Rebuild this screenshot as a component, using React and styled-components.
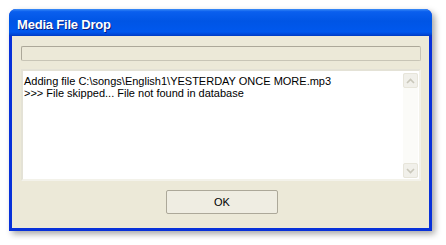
import React from "react";
import styled, { createGlobalStyle } from "styled-components";

const GlobalStyle = createGlobalStyle`
  html, body {
    margin: 0;
    padding: 0;
    background: #ffffff;
  }
  body {
    font-family: "Liberation Sans", Arial, sans-serif;
  }
`;

const lines = [
  "Adding file C:\\songs\\English1\\YESTERDAY ONCE MORE.mp3",
  ">>> File skipped... File not found in database",
];

const App = () => {
  return (
    <>
      <GlobalStyle />
      <Page>
        <Window>
          <TitleBar>
            <Title>Media File Drop</Title>
          </TitleBar>
          <Body>
            <Progress />
            <LogBox>
              <LogText>
                {lines.map((l, i) => (
                  <div key={i}>{l}</div>
                ))}
              </LogText>
              <ScrollBar>
                <ScrollButton>
                  <Arrow up />
                </ScrollButton>
                <Track />
                <ScrollButton>
                  <Arrow />
                </ScrollButton>
              </ScrollBar>
            </LogBox>
            <ButtonRow>
              <Button>OK</Button>
            </ButtonRow>
          </Body>
        </Window>
      </Page>
    </>
  );
};

const Arrow = ({ up }) => (
  <svg width="9" height="6" viewBox="0 0 9 6">
    <path
      d={up ? "M1 5 L4.5 1.5 L8 5" : "M1 1 L4.5 4.5 L8 1"}
      fill="none"
      stroke="#c9c7ba"
      strokeWidth="1.6"
    />
  </svg>
);

const Page = styled.div`
  padding: 9px;
`;

const Window = styled.div`
  width: 423px;
  height: 222px;
  box-sizing: border-box;
  display: flex;
  flex-direction: column;
  background: #0831d9;
  border-radius: 7px 7px 0 0;
  box-shadow: 3px 3px 6px rgba(0, 0, 0, 0.35);
  padding: 0 3px 3px 3px;
`;

const TitleBar = styled.div`
  height: 27px;
  margin: 0 -3px;
  padding: 0 8px;
  display: flex;
  align-items: center;
  border-radius: 7px 7px 0 0;
  background: linear-gradient(
    to bottom,
    #3b8cf7 0%,
    #0a5fee 10%,
    #0055e5 45%,
    #0058ee 85%,
    #0046d5 95%,
    #003bc0 100%
  );
`;

const Title = styled.div`
  color: #ffffff;
  font-weight: bold;
  font-size: 13px;
  letter-spacing: -0.2px;
  padding-top: 3px;
  text-shadow: 1px 1px 0 #0a1e80;
`;

const Body = styled.div`
  flex: 1;
  background: #ece9d8;
  display: flex;
  flex-direction: column;
  padding: 10px 8px 0 9px;
`;

const Progress = styled.div`
  height: 15px;
  box-sizing: border-box;
  border: 1px solid #aca899;
  border-right-color: #c8c5b6;
  border-bottom-color: #c8c5b6;
  background: #ece9d8;
  border-radius: 2px;
`;

const LogBox = styled.div`
  margin-top: 8px;
  height: 112px;
  box-sizing: border-box;
  background: #ffffff;
  border: 2px solid #f3f2ea;
  border-top-color: #e4e2d6;
  border-left-color: #e4e2d6;
  display: flex;
  padding: 2px 1px 1px 1px;
`;

const LogText = styled.div`
  flex: 1;
  font-size: 11px;
  line-height: 12px;
  color: #000000;
  padding-top: 2px;
  white-space: nowrap;
`;

const ScrollBar = styled.div`
  width: 15px;
  display: flex;
  flex-direction: column;
  background: #fbfbf8;
`;

const ScrollButton = styled.div`
  height: 15px;
  box-sizing: border-box;
  border: 1px solid #e7e5da;
  border-radius: 2px;
  background: #f1f0ea;
  display: flex;
  align-items: center;
  justify-content: center;
`;

const Track = styled.div`
  flex: 1;
  background: #fbfbf8;
`;

const ButtonRow = styled.div`
  display: flex;
  justify-content: center;
  margin-top: 9px;
`;

const Button = styled.button`
  width: 112px;
  height: 24px;
  box-sizing: border-box;
  border: 1px solid #aca899;
  border-radius: 2px;
  background: #efede2;
  font-family: "Liberation Sans", Arial, sans-serif;
  font-size: 11px;
  color: #000000;
  padding: 0;
  margin-left: 2px;
`;

export default App;
